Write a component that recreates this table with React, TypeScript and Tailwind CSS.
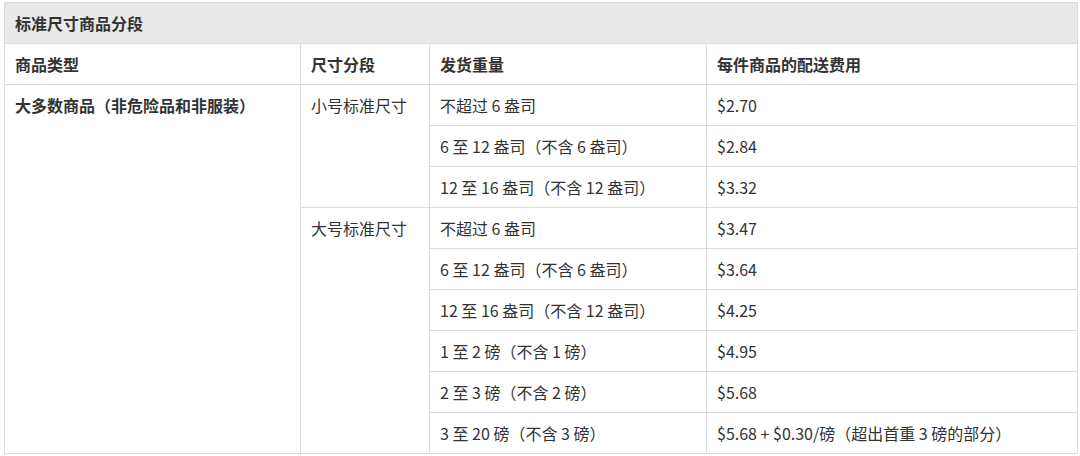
const rows = [
  { weight: "不超过 6 盎司", fee: "$2.70" },
  { weight: "6 至 12 盎司（不含 6 盎司）", fee: "$2.84" },
  { weight: "12 至 16 盎司（不含 12 盎司）", fee: "$3.32" },
  { weight: "不超过 6 盎司", fee: "$3.47" },
  { weight: "6 至 12 盎司（不含 6 盎司）", fee: "$3.64" },
  { weight: "12 至 16 盎司（不含 12 盎司）", fee: "$4.25" },
  { weight: "1 至 2 磅（不含 1 磅）", fee: "$4.95" },
  { weight: "2 至 3 磅（不含 2 磅）", fee: "$5.68" },
  { weight: "3 至 20 磅（不含 3 磅）", fee: "$5.68 + $0.30/磅（超出首重 3 磅的部分）" },
];

const cell = "border border-[#dcdcdc] px-[10px] h-[41px] align-middle leading-[24px]";

export default function App() {
  return (
    <div className="h-[456px] w-[1080px] overflow-hidden bg-white pl-[4px] pt-[2px] font-['Segoe_UI','Noto_Sans_CJK_SC',sans-serif] text-[16px] text-[#333]">
      <table className="w-[1074px] table-fixed border-collapse">
        <colgroup>
          <col className="w-[296px]" />
          <col className="w-[129px]" />
          <col className="w-[277px]" />
          <col />
        </colgroup>
        <tbody>
          <tr>
            <td colSpan={4} className={`${cell} bg-[#e9e9e9] font-bold`}>
              标准尺寸商品分段
            </td>
          </tr>
          <tr className="font-bold">
            <td className={cell}>商品类型</td>
            <td className={cell}>尺寸分段</td>
            <td className={cell}>发货重量</td>
            <td className={cell}>每件商品的配送费用</td>
          </tr>
          {rows.map((r, i) => (
            <tr key={i}>
              {i === 0 && (
                <td rowSpan={9} className={`${cell} align-top pt-[8px] font-bold`}>
                  大多数商品（非危险品和非服装）
                </td>
              )}
              {i === 0 && (
                <td rowSpan={3} className={`${cell} align-top pt-[8px]`}>
                  小号标准尺寸
                </td>
              )}
              {i === 3 && (
                <td rowSpan={6} className={`${cell} align-top pt-[8px]`}>
                  大号标准尺寸
                </td>
              )}
              <td className={cell}>{r.weight}</td>
              <td className={cell}>{r.fee}</td>
            </tr>
          ))}
        </tbody>
      </table>
    </div>
  );
}
